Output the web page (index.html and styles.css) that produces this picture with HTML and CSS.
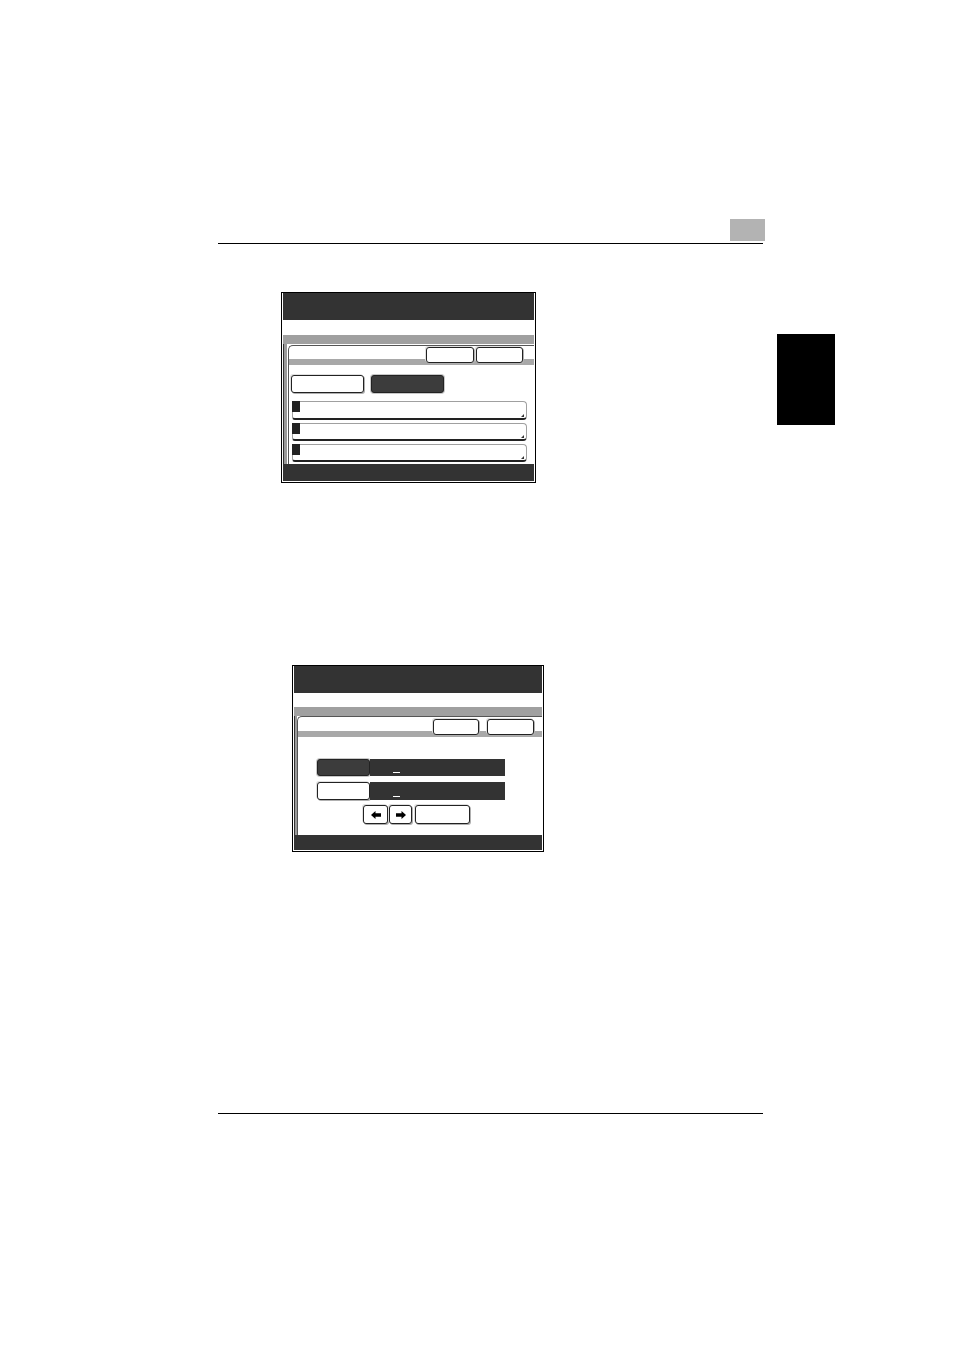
FILE: index.html
```html
<!DOCTYPE html>
<html>
<head>
<meta charset="utf-8">
<link rel="stylesheet" href="styles.css">
</head>
<body>
<div class="page">
  <div class="header">
    <div class="chap"></div>
    <div class="rule"></div>
  </div>
  <div class="tab"></div>

  <div class="screen s1">
    <div class="lcd">
      <div class="title"></div>
      <div class="gap g1"></div>
      <div class="band"></div>
      <div class="body">
        <div class="rail"></div>
        <div class="panel p1">
          <div class="toprow t1">
            <div class="btn b48"></div>
            <div class="btn b47"></div>
          </div>
          <div class="modes">
            <div class="btn mode"></div>
            <div class="btn mode dark"></div>
          </div>
          <div class="rows">
            <div class="row first"><span class="sq"></span><span class="mark"></span></div>
            <div class="row"><span class="sq"></span><span class="mark"></span></div>
            <div class="row"><span class="sq"></span><span class="mark"></span></div>
          </div>
        </div>
      </div>
      <div class="foot f1"></div>
    </div>
  </div>

  <div class="screen s2">
    <div class="lcd">
      <div class="title"></div>
      <div class="gap g2"></div>
      <div class="band"></div>
      <div class="body">
        <div class="rail r2"></div>
        <div class="panel p2">
          <div class="toprow t2">
            <div class="btn b46"></div>
            <div class="btn b47"></div>
          </div>
          <div class="entry e1">
            <div class="btn key dark"></div>
            <div class="field"><span class="cursor"></span></div>
          </div>
          <div class="entry e2">
            <div class="btn key"></div>
            <div class="field"><span class="cursor"></span></div>
          </div>
          <div class="nav">
            <div class="btn arrow a25"><svg width="10" height="8" viewBox="0 0 10 8"><path d="M0 4 L4.5 0 L4.5 2.3 L10 2.3 L10 5.7 L4.5 5.7 L4.5 8 Z" fill="#000"/></svg></div>
            <div class="btn arrow a23"><svg width="10" height="8" viewBox="0 0 10 8"><path d="M10 4 L5.5 0 L5.5 2.3 L0 2.3 L0 5.7 L5.5 5.7 L5.5 8 Z" fill="#000"/></svg></div>
            <div class="btn wide"></div>
          </div>
        </div>
      </div>
      <div class="foot f2"></div>
    </div>
  </div>

  <div class="footer">
    <div class="rule"></div>
  </div>
</div>
</body>
</html>
```

FILE: styles.css
```css
* { box-sizing: border-box; }
html, body { margin: 0; padding: 0; background: #fff; }
body { font-family: "Liberation Sans", Arial, sans-serif; }
.page { position: relative; width: 954px; height: 1350px; overflow: hidden; }

.header { margin-left: 218px; width: 545px; padding-top: 219px; }
.chap { width: 35px; height: 22px; background: #b3b3b3; margin-left: auto; margin-right: -2px; }
.rule { height: 1px; background: #000; margin-top: 2px; }

.tab { position: absolute; left: 777px; top: 334px; width: 58px; height: 91px; background: #000; }

.screen { border: 1px solid #000; padding: 0 1px 1px 1px; background: #fff; }
.s1 { margin-left: 281px; width: 255px; margin-top: 48px; }
.s2 { margin-left: 292px; width: 252px; margin-top: 182px; }

.lcd { display: flex; flex-direction: column; background: #fff; }
.title { height: 27px; background: #333; }
.gap.g1 { height: 15px; }
.gap.g2 { height: 14px; }
.band { height: 9px; background: #a0a0a0; }

.body { display: flex; }
.rail { width: 5px; background: linear-gradient(to right, #333 0, #333 1px, #9a9a9a 1px, #9a9a9a 4px, #fff 4px); }
.rail.r2 { width: 3px; background: linear-gradient(to right, #333 0, #333 1px, #9a9a9a 1px); }

.panel { flex: 1; border-top: 1px solid #555; border-left: 1px solid #555; border-top-left-radius: 5px; }
.p1 { margin-top: 1px; padding-bottom: 2px; }
.p2 { padding-bottom: 11px; }

.toprow { display: flex; justify-content: flex-end; align-items: flex-start; }
.t1 { height: 19px; gap: 2px; padding-right: 11px; background: linear-gradient(to bottom, transparent 13px, #a8a8a8 13px); }
.t2 { height: 20px; gap: 8px; padding-right: 8px; background: linear-gradient(to bottom, transparent 14px, #a8a8a8 14px); }

.btn { background: #fff; border: 1px solid #222; border-radius: 3px; box-shadow: 1px 1px 0 #b0b0b0, -1px -1px 0 #e0e0e0; }
.btn.dark { background: #3c3c3c; box-shadow: 0 0 0 1px #c8c8c8; }
.t1 .btn { margin-top: 1px; height: 16px; }
.t2 .btn { margin-top: 2px; height: 16px; }
.b48 { width: 48px; }
.b47 { width: 47px; }
.b46 { width: 46px; }

.modes { display: flex; gap: 7px; margin-top: 10px; padding-left: 2px; }
.mode { width: 73px; height: 18px; }

.rows { display: flex; flex-direction: column; gap: 3px; margin-top: 8px; padding-left: 3px; width: 238px; }
.row { height: 18px; display: flex; justify-content: space-between; border: 1px solid #a0a0a0; border-bottom: 2px solid #222; border-radius: 3px 4px 4px 3px; }
.row.first { height: 19px; }
.sq { width: 8px; height: 11px; background: #222; margin: -1px 0 0 -1px; }
.mark { align-self: flex-end; width: 0; height: 0; border-left: 3px solid transparent; border-bottom: 3px solid #333; margin: 0 2px 1px 0; }

.entry { display: flex; padding-left: 19px; }
.e1 { margin-top: 22px; }
.e2 { margin-top: 6px; }
.key { width: 53px; }
.e1 .key, .e1 .field { height: 17px; }
.e2 .key, .e2 .field { height: 18px; }
.field { width: 135px; background: #333; display: flex; align-items: flex-end; padding: 0 0 3px 23px; }
.cursor { width: 7px; height: 1px; background: #fff; }

.nav { display: flex; margin-top: 5px; padding-left: 65px; }
.nav .btn { height: 19px; display: flex; align-items: center; justify-content: center; }
.a25 { width: 25px; }
.a23 { width: 23px; margin-left: 1px; }
.wide { width: 55px; margin-left: 3px; }

.foot { background: #333; }
.f1 { height: 17px; }
.f2 { height: 15px; }

.footer { margin-left: 218px; width: 545px; margin-top: 261px; }
.footer .rule { margin-top: 0; }
```
